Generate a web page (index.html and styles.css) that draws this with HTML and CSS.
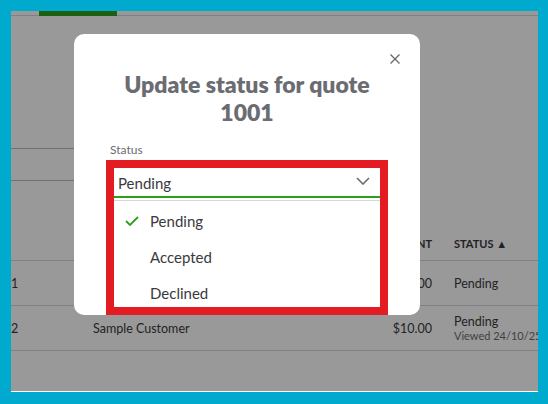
FILE: index.html
```html
<!DOCTYPE html>
<html lang="en">
<head>
    <meta charset="UTF-8">
    <meta name="viewport" content="width=device-width, initial-scale=1.0">
    <title>Update status for quote 1001</title>
    <link rel="stylesheet" href="styles.css">
</head>
<body>
    <div class="frame">
        <div class="screen">
            <div class="page">
                <div class="tabs">
                    <span class="tab-active"></span>
                </div>
                <div class="filters">
                    <div class="filter-row"></div>
                    <div class="filter-row"></div>
                </div>
                <div class="table">
                    <div class="row head">
                        <div></div>
                        <div>CUSTOMER</div>
                        <div class="num">AMOUNT</div>
                        <div class="status">STATUS &#9650;</div>
                    </div>
                    <div class="row">
                        <div>1</div>
                        <div>Sample Customer</div>
                        <div class="num">$10.00</div>
                        <div class="status">Pending</div>
                    </div>
                    <div class="row">
                        <div>2</div>
                        <div>Sample Customer</div>
                        <div class="num">$10.00</div>
                        <div class="status">Pending<span class="viewed">Viewed 24/10/25</span></div>
                    </div>
                </div>
            </div>

            <div class="overlay"></div>

            <div class="modal">
                <button class="close" aria-label="Close">
                    <svg width="10" height="10" viewBox="0 0 10 10"><path d="M0.5 0.5 L9.5 9.5 M9.5 0.5 L0.5 9.5" stroke="#6b6c72" stroke-width="1.4" fill="none"/></svg>
                </button>
                <h2>Update status for quote 1001</h2>
                <label class="field-label">Status</label>
                <div class="select">
                    <span>Pending</span>
                    <svg width="14" height="8" viewBox="0 0 14 8"><path d="M1 1 L7 7 L13 1" stroke="#6b6c72" stroke-width="1.6" fill="none"/></svg>
                </div>
                <ul class="options">
                    <li class="selected">
                        <svg width="14" height="10" viewBox="0 0 14 10"><path d="M1 5 L5 9 L13 1" stroke="#2ca01c" stroke-width="1.8" fill="none"/></svg>
                        Pending
                    </li>
                    <li>Accepted</li>
                    <li>Declined</li>
                </ul>
                <div class="highlight"></div>
            </div>
        </div>
    </div>
</body>
</html>
```

FILE: styles.css
```css
body {
    margin: 0;
    background: #00a9ce;
    font-family: Lato, "Open Sans", sans-serif;
    color: #393a3d;
}
.frame {
    box-sizing: border-box;
    height: 404px;
    padding: 11px 10px 12px 11px;
}
.screen {
    position: relative;
    height: 381px;
    background: #fff;
    overflow: hidden;
}
.tabs {
    height: 4px;
    border-bottom: 1px solid #d4d7dc;
    padding-left: 28px;
}
.tab-active {
    display: block;
    width: 78px;
    height: 5px;
    background: #2ca01c;
}
.filters {
    padding-top: 101px;
    width: 300px;
}
.filter-row {
    height: 31px;
    border-bottom: 1px solid #babec5;
}
.table {
    margin-top: 45px;
    font-size: 12.5px;
}
.row {
    display: grid;
    grid-template-columns: 82px 248px 91px 106px;
    align-items: center;
    height: 44px;
    border-bottom: 1px solid #d4d7dc;
}
.row.head {
    height: 34px;
    font-weight: bold;
    font-size: 11px;
}
.num {
    text-align: right;
}
.status {
    padding-left: 22px;
    white-space: nowrap;
}
.viewed {
    display: block;
    font-size: 11px;
    color: #6b6c72;
}
.overlay {
    position: absolute;
    top: 0;
    left: 0;
    right: 0;
    bottom: 1px;
    background: rgba(0, 0, 0, 0.4);
}
.modal {
    position: absolute;
    left: 63px;
    top: 23px;
    width: 346px;
    height: 281px;
    box-sizing: border-box;
    padding: 36px 36px 0;
    background: #fff;
    border-radius: 10px;
}
.close {
    position: absolute;
    top: 20px;
    right: 20px;
    padding: 0;
    border: none;
    background: none;
    line-height: 0;
}
h2 {
    margin: 0 0 16px;
    text-align: center;
    font-size: 23px;
    line-height: 28px;
    font-weight: 800;
    color: #6b6c72;
}
.field-label {
    display: block;
    font-size: 12px;
    line-height: 16px;
    color: #6b6c72;
}
.select {
    display: flex;
    justify-content: space-between;
    align-items: center;
    box-sizing: border-box;
    height: 34px;
    margin-top: 6px;
    padding: 5px 14px 0 8px;
    border-bottom: 2px solid #2ca01c;
    font-size: 15px;
}
.select svg {
    margin-top: -4px;
}
.options {
    list-style: none;
    margin: 2px 0 0;
    padding: 2px 0 0;
    border-top: 1px solid #d4d7dc;
    font-size: 15px;
}
.options li {
    display: flex;
    align-items: center;
    height: 36px;
    padding-left: 40px;
}
.options li.selected {
    padding-left: 15px;
    gap: 11px;
}
.highlight {
    position: absolute;
    left: 32px;
    top: 126px;
    width: 282px;
    height: 155px;
    box-sizing: border-box;
    border: 8px solid #e31c23;
}
```
